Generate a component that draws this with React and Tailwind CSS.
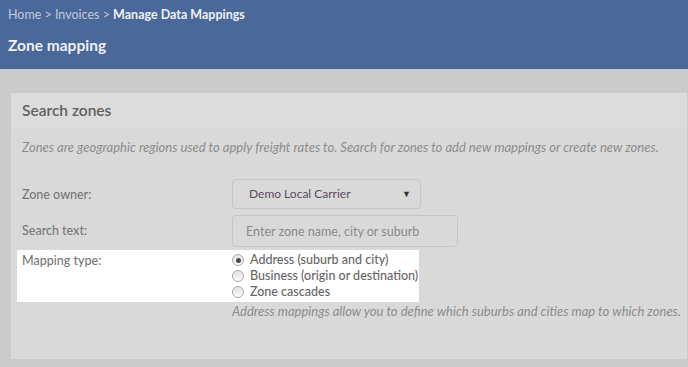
import { useState } from 'react';

const options = [
  { id: 'address', label: 'Address (suburb and city)' },
  { id: 'business', label: 'Business (origin or destination)' },
  { id: 'cascade', label: 'Zone cascades' },
];

function Radio({ checked, label, onClick }) {
  return (
    <button onClick={onClick} className="flex items-center h-4 text-left">
      <span className="h-3 w-3 rounded-full border border-[#a9a9a9] bg-gradient-to-b from-[#e4e4e4] to-[#fafafa] flex items-center justify-center">
        {checked && <span className="h-[5px] w-[5px] rounded-full bg-[#4a4a4a]" />}
      </span>
      <span className="ml-[6px] text-[12.5px] font-medium text-[#666] leading-4">{label}</span>
    </button>
  );
}

export default function App() {
  const [type, setType] = useState('address');

  return (
    <div className="w-[688px] h-[367px] overflow-hidden bg-[#cbcbcb] font-['Lato',sans-serif]">
      {/* Header */}
      <header className="h-[69px] bg-[#4a6899] px-2 pt-[7px]">
        <div className="text-[12.5px] leading-4 text-[#c3cbd9]">
          Home &gt; Invoices &gt; <span className="font-bold text-[#eef0f4]">Manage Data Mappings</span>
        </div>
        <h1 className="mt-3 text-[15.5px] leading-5 font-bold text-[#eef0f4]">Zone mapping</h1>
      </header>

      <div className="pt-6 pl-[11px] pr-[1px]">
        <section className="h-[266px] bg-[#d9d9d9]">
          <div className="h-9 bg-[#dcdcdc] px-[11px] flex items-center">
            <h2 className="text-[15.5px] font-semibold text-[#606060]">Search zones</h2>
          </div>

          <div className="px-[11px] pt-2">
            <p className="text-[13px] leading-5 italic text-[#8c8c8c]">
              Zones are geographic regions used to apply freight rates to. Search for zones to add new mappings or create new zones.
            </p>

            <div className="mt-[22px] flex items-center">
              <label className="w-[210px] pt-[3px] text-[12.5px] font-medium text-[#777]">Zone owner:</label>
              <div className="w-[189px] h-[30px] rounded border border-[#c6c6c6] flex items-center justify-between pl-4 pr-[9px]">
                <span className="text-[12px] text-[#5a4c5e]">Demo Local Carrier</span>
                <span className="text-[9px] text-[#333]">▼</span>
              </div>
            </div>

            <div className="mt-[6px] flex items-center">
              <label className="w-[210px] text-[12.5px] font-medium text-[#777]">Search text:</label>
              <input
                placeholder="Enter zone name, city or suburb"
                className="w-[226px] h-[32px] rounded border border-[#c6c6c6] bg-transparent px-[13px] text-[12.5px] text-[#555] placeholder:text-[#8a8a8a] outline-none"
              />
            </div>

            <div className="mt-[3px] -ml-[5px] w-[402px] bg-white pl-[5px] py-[2px] flex">
              <label className="w-[210px] pt-px text-[12.5px] font-medium leading-4 text-[#777]">Mapping type:</label>
              <div className="flex flex-col">
                {options.map((o) => (
                  <Radio key={o.id} label={o.label} checked={type === o.id} onClick={() => setType(o.id)} />
                ))}
              </div>
            </div>

            <p className="ml-[210px] whitespace-nowrap text-[13px] leading-[18px] italic text-[#8c8c8c]">
              Address mappings allow you to define which suburbs and cities map to which zones.
            </p>
          </div>
        </section>
      </div>
    </div>
  );
}
